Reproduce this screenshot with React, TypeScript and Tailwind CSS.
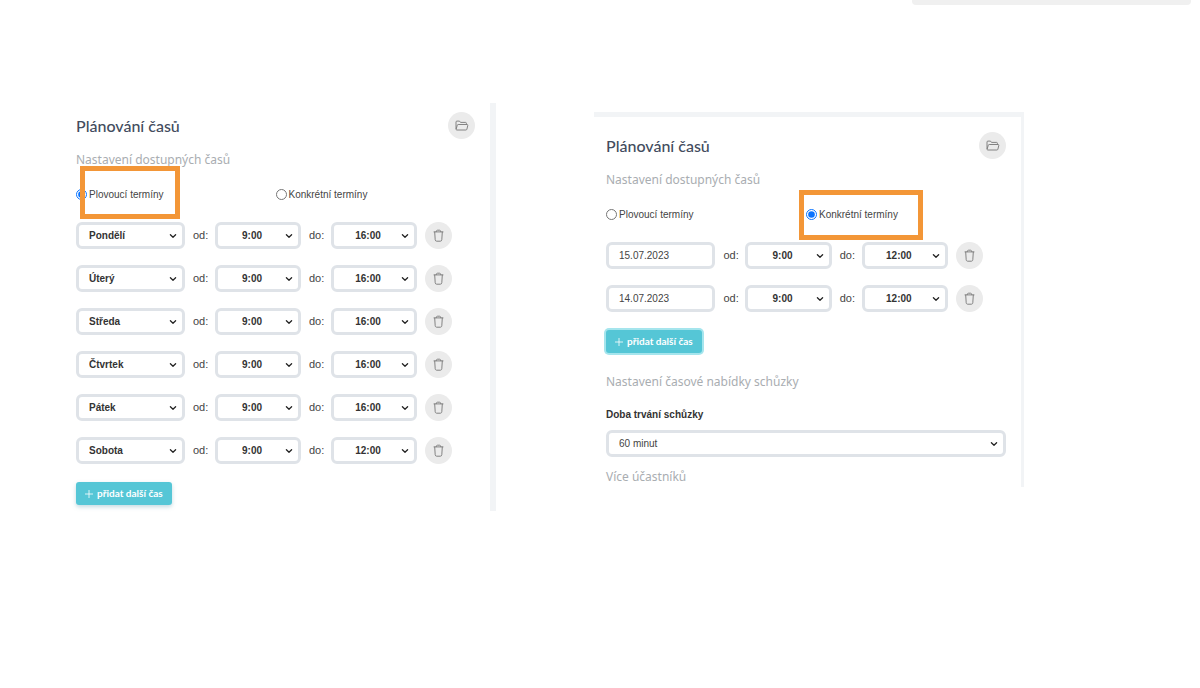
import { useId, type ReactNode } from 'react';

const weekRows = [
  { day: 'Pondělí', from: '9:00', to: '16:00' },
  { day: 'Úterý', from: '9:00', to: '16:00' },
  { day: 'Středa', from: '9:00', to: '16:00' },
  { day: 'Čtvrtek', from: '9:00', to: '16:00' },
  { day: 'Pátek', from: '9:00', to: '16:00' },
  { day: 'Sobota', from: '9:00', to: '12:00' },
];

const dateRows = [
  { date: '15.07.2023', from: '9:00', to: '12:00' },
  { date: '14.07.2023', from: '9:00', to: '12:00' },
];

const days = ['Pondělí', 'Úterý', 'Středa', 'Čtvrtek', 'Pátek', 'Sobota', 'Neděle'];
const times = ['9:00', '10:00', '11:00', '12:00', '13:00', '14:00', '15:00', '16:00'];

function Chevron() {
  return (
    <svg
      viewBox="0 0 8 6"
      className="pointer-events-none absolute right-2 top-1/2 h-1.5 w-2 -translate-y-1/2"
      fill="none"
      stroke="#222"
      strokeWidth="1.3"
      strokeLinecap="round"
      strokeLinejoin="round"
    >
      <path d="M1.4 1.8 4 4.2l2.6-2.4" />
    </svg>
  );
}

function TrashIcon() {
  return (
    <svg viewBox="0 0 12 14" className="h-3.5 w-3" fill="none" stroke="#777" strokeWidth="0.9" strokeLinecap="round">
      <path d="M1 2.9h9M3.2 2.7c.1-1 .5-1.5 1.3-1.5h2c.8 0 1.2.5 1.3 1.5M1.7 3.1l.5 7.6c.1 1 .6 1.5 1.5 1.5h3.6c.9 0 1.4-.5 1.5-1.5l.5-7.6" />
    </svg>
  );
}

function FolderIcon() {
  return (
    <svg viewBox="0 0 14 12" className="h-3 w-3.5" fill="none" stroke="#777" strokeWidth="0.9" strokeLinejoin="round">
      <path d="M1 9V2c0-.6.3-.9.9-.9h2.6l1 1.3h5c.6 0 .9.3.9.9v1.2" />
      <path d="M1.1 9.2 2.3 5.2c.1-.4.4-.7.9-.7h8.9c.6 0 .8.4.7.9l-.9 3.8c-.1.5-.5.8-1 .8H1.8c-.6 0-.8-.3-.7-.8z" />
    </svg>
  );
}

function RoundButton({ label, children }: { label: string; children: ReactNode }) {
  return (
    <button
      type="button"
      aria-label={label}
      className="flex h-[27px] w-[27px] shrink-0 items-center justify-center rounded-full bg-[#ebebeb]"
    >
      {children}
    </button>
  );
}

function TimeSelect({ id, value }: { id: string; value: string }) {
  return (
    <div className="relative min-w-0 flex-[86]">
      <select
        id={id}
        defaultValue={value}
        className="block h-[27px] w-full appearance-none rounded-md border-[3px] border-[#dfe3e8] bg-white pr-3 text-center text-[10px] font-bold text-[#333]"
      >
        {times.map((t) => (
          <option key={t}>{t}</option>
        ))}
      </select>
      <Chevron />
    </div>
  );
}

function TimeRow({ from, to, children }: { from: string; to: string; children: ReactNode }) {
  const id = useId();
  return (
    <div className="flex items-center gap-2 pr-[23px]">
      <div className="relative min-w-0 flex-[109]">{children}</div>
      <label htmlFor={`${id}-from`} className="w-3.5 whitespace-nowrap">
        od:
      </label>
      <TimeSelect id={`${id}-from`} value={from} />
      <label htmlFor={`${id}-to`} className="w-3.5 whitespace-nowrap">
        do:
      </label>
      <TimeSelect id={`${id}-to`} value={to} />
      <RoundButton label="Smazat">
        <TrashIcon />
      </RoundButton>
    </div>
  );
}

function PanelHeader() {
  return (
    <>
      <div className="flex items-center justify-between">
        <h2 className="font-[Lato,sans-serif] text-base font-medium text-[#434c5e]">Plánování časů</h2>
        <RoundButton label="Otevřít">
          <FolderIcon />
        </RoundButton>
      </div>
      <Subheading className="mt-[11px]">Nastavení dostupných časů</Subheading>
    </>
  );
}

function Subheading({ className, children }: { className: string; children: ReactNode }) {
  return (
    <h3 className={`${className} font-['Noto_Sans',sans-serif] text-[12px] leading-5 text-[#a9adb1]`}>{children}</h3>
  );
}

function TermType({ name, selected }: { name: string; selected: 'floating' | 'fixed' }) {
  return (
    <div className="mt-3.5 grid grid-cols-2 text-[10px]">
      <label className="relative flex h-5 items-center gap-0.5">
        <input type="radio" name={name} defaultChecked={selected === 'floating'} className="h-[11px] w-[11px] accent-[#0a74ff]" />
        Plovoucí termíny
        {selected === 'floating' && (
          <span className="pointer-events-none absolute -top-[18px] left-1 h-[53px] w-[100px] border-[5px] border-[#f39637]" />
        )}
      </label>
      <label className="relative flex h-5 items-center gap-0.5">
        <input type="radio" name={name} defaultChecked={selected === 'fixed'} className="h-[11px] w-[11px] accent-[#0a74ff]" />
        Konkrétní termíny
        {selected === 'fixed' && (
          <span className="pointer-events-none absolute -left-[7px] -top-3.5 h-[50px] w-[124px] border-[5px] border-[#f39637]" />
        )}
      </label>
    </div>
  );
}

function AddButton({ focused = false }: { focused?: boolean }) {
  return (
    <button
      type="button"
      className={`mt-[18px] flex h-[23px] items-center gap-1 rounded-[3px] bg-[#55c6d6] px-[9px] font-[Lato,sans-serif] text-[10px] font-bold text-white ${
        focused ? 'ring-2 ring-[#a5e5ed]' : 'shadow-[0_2px_4px_rgba(85,150,170,0.35)]'
      }`}
    >
      <svg viewBox="0 0 8 8" className="h-2 w-2" stroke="currentColor" strokeWidth="0.8">
        <path d="M4 0v8M0 4h8" />
      </svg>
      přidat další čas
    </button>
  );
}

export default function App() {
  return (
    <div lang="cs" className="min-h-screen bg-white font-['Liberation_Sans',sans-serif] text-[11px] text-[#444]">
      <div className="flex justify-end pr-[9px]">
        <div className="h-[5px] w-[279px] rounded-b bg-[#f0f0f0]" />
      </div>

      <main className="grid grid-cols-[432fr_430fr] items-start gap-x-[98px] pl-16 pr-44 pt-[98px]">
        <section className="border-r-[6px] border-[#f2f4f6] pb-1.5 pl-3 pr-[15px] pt-[9px]">
          <PanelHeader />
          <TermType name="week-type" selected="floating" />
          <div className="mt-[18px] flex flex-col gap-4">
            {weekRows.map((row) => (
              <TimeRow key={row.day} from={row.from} to={row.to}>
                <select
                  aria-label="Den"
                  defaultValue={row.day}
                  className="block h-[27px] w-full appearance-none rounded-md border-[3px] border-[#dfe3e8] bg-white pl-2.5 text-[10px] font-bold text-[#333]"
                >
                  {days.map((d) => (
                    <option key={d}>{d}</option>
                  ))}
                </select>
                <Chevron />
              </TimeRow>
            ))}
          </div>
          <AddButton />
        </section>

        <section className="mt-[9px] border-r-[3px] border-t-[5px] border-[#f2f4f6] pl-3 pr-[15px] pt-[15px]">
          <PanelHeader />
          <TermType name="date-type" selected="fixed" />
          <div className="mt-[18px] flex flex-col gap-4">
            {dateRows.map((row) => (
              <TimeRow key={row.date} from={row.from} to={row.to}>
                <input
                  type="text"
                  aria-label="Datum"
                  defaultValue={row.date}
                  className="block h-[27px] w-full rounded-md border-[3px] border-[#dfe3e8] bg-white pl-2.5 text-[10px] text-[#444]"
                />
              </TimeRow>
            ))}
          </div>
          <AddButton focused />

          <Subheading className="mt-[19px]">Nastavení časové nabídky schůzky</Subheading>
          <label htmlFor="duration" className="mt-[13px] block text-[10px] leading-5 font-bold text-[#333]">
            Doba trvání schůzky
          </label>
          <div className="relative mt-[5px]">
            <select
              id="duration"
              className="block h-[27px] w-full appearance-none rounded-md border-[3px] border-[#dfe3e8] bg-white pl-2.5 text-[10px] text-[#444]"
            >
              <option>60 minut</option>
              <option>30 minut</option>
            </select>
            <Chevron />
          </div>
          <Subheading className="mt-2.5">Více účastníků</Subheading>
        </section>
      </main>
    </div>
  );
}
